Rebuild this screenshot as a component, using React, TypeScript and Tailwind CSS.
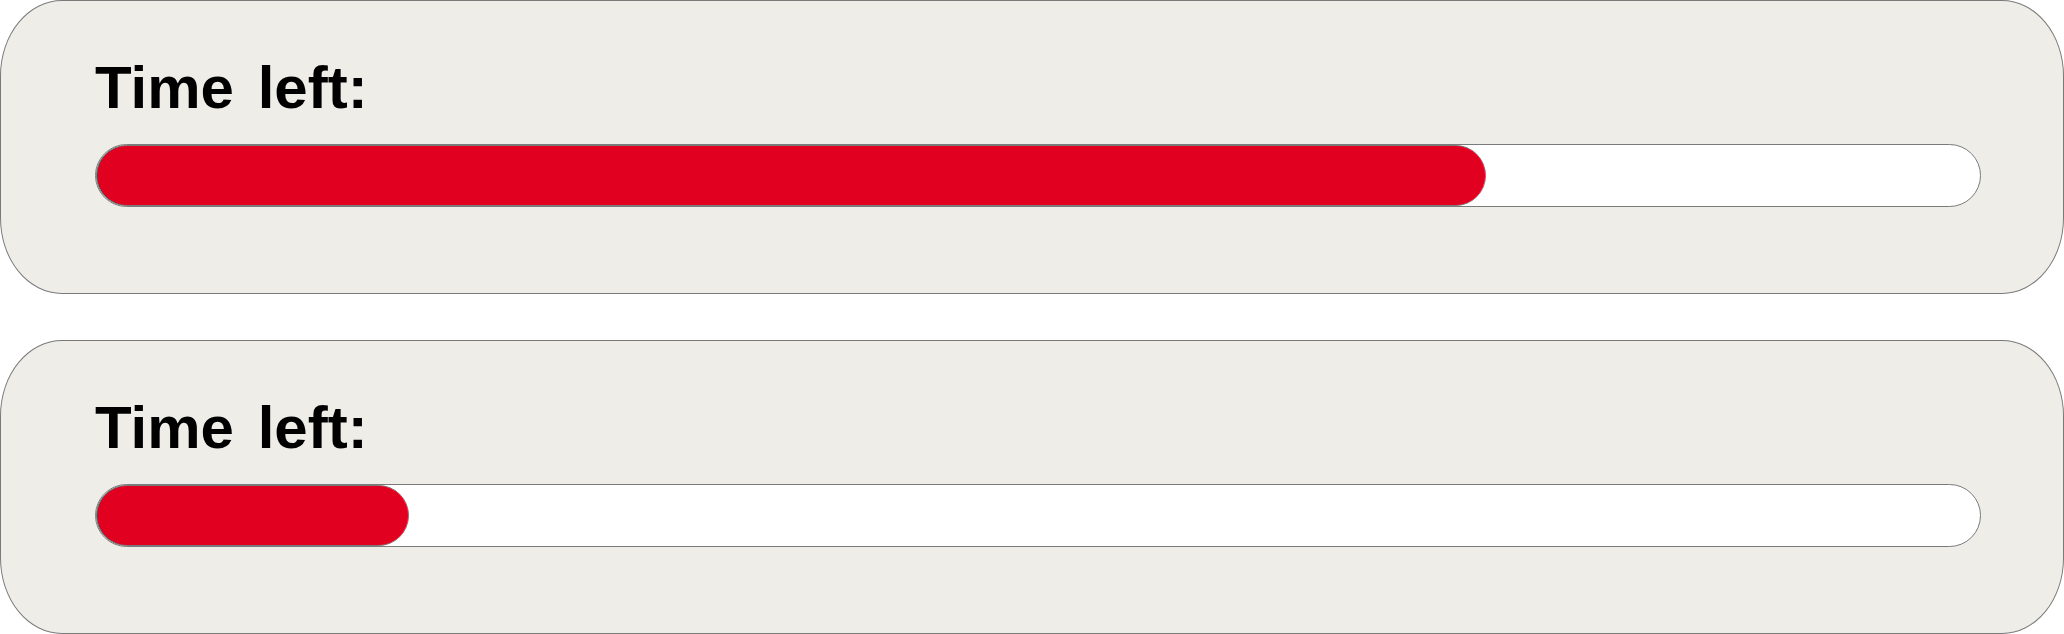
import React from "react";

type TimerProps = {
	percent: number;
};

function TimerCard({ percent }: TimerProps) {
	return (
		<div className="h-[294px] rounded-[62px/76px] border border-[#7a7a7a] bg-[#eeede8] pl-[94px] pr-[82px] pt-[52px]">
			<p className="text-[60px] font-bold leading-[69px] text-black [word-spacing:7px]">Time left:</p>
			<div className="mt-[22px] h-[63px] rounded-full border border-[#7a7a7a] bg-white">
				<div
					className="h-full rounded-full border border-[#7a7a7a] bg-[#e10020]"
					style={{ width: `${percent}%` }}
				/>
			</div>
		</div>
	);
}

export default function App() {
	return (
		<div className="flex w-[2064px] flex-col gap-[46px] bg-white font-['Liberation_Sans',Arial,sans-serif]">
			<TimerCard percent={73.8} />
			<TimerCard percent={16.6} />
		</div>
	);
}
